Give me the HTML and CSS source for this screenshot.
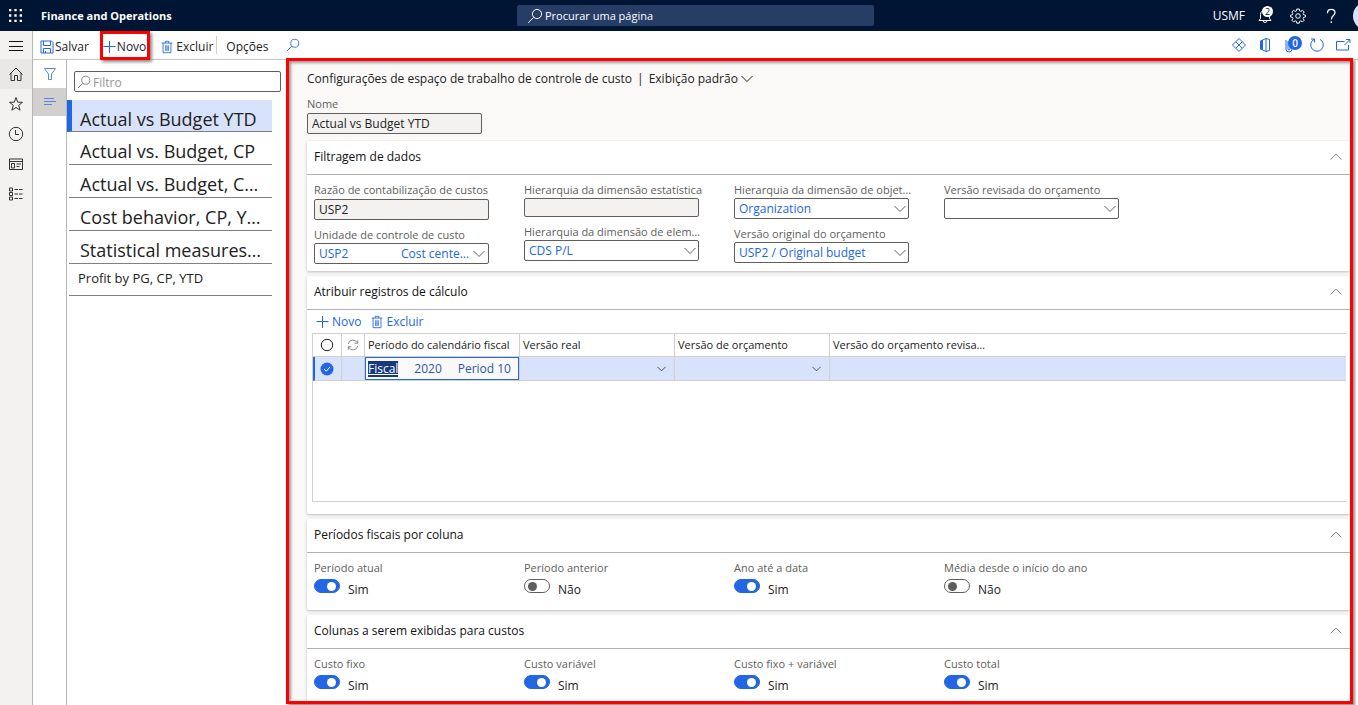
FILE: index.html
```html
<!DOCTYPE html>
<html lang="pt">
<head>
<meta charset="utf-8">
<title>Finance and Operations</title>
<link rel="stylesheet" href="styles.css">
</head>
<body>
<svg class="defs" aria-hidden="true">
  <symbol id="search" viewBox="0 0 16 16"><circle cx="10" cy="6" r="4.6"/><path d="M6.6 9.4 1.2 14.8"/></symbol>
  <symbol id="plus" viewBox="0 0 14 14"><path d="M6.500 1v12M.5 6.500h12"/></symbol>
  <symbol id="trash" viewBox="0 0 14 16"><path d="M1 3.500h12M5 3.500v-2h4v2M2.500 3.500v11h9v-11M5.500 6v6.500M7 6v6.500M8.500 6v6.500"/></symbol>
  <symbol id="down" viewBox="0 0 12 8"><path d="M.5 1 6 6.500 11.500 1"/></symbol>
  <symbol id="up" viewBox="0 0 12 8"><path d="M.5 6.500 6 1l5.500 5.500"/></symbol>
</svg>

<header class="topbar">
  <div class="brand">
    <button class="icon-btn" aria-label="Aplicativos">
      <svg class="waffle" viewBox="0 0 14 14"><path d="M0 0h2.500v2.500H0zM5.750 0h2.500v2.500h-2.500zM11.500 0H14v2.500h-2.500zM0 5.750h2.500v2.500H0zM5.750 5.750h2.500v2.500h-2.500zM11.500 5.750H14v2.500h-2.500zM0 11.500h2.500V14H0zM5.750 11.500h2.500V14h-2.500zM11.500 11.500H14V14h-2.500z"/></svg>
    </button>
    <span class="product">Finance and Operations</span>
  </div>
  <label class="page-search">
    <svg class="i16"><use href="#search"/></svg>
    <input type="text" placeholder="Procurar uma página" aria-label="Procurar uma página">
  </label>
  <div class="account">
    <span class="company">USMF</span>
    <button class="icon-btn bell" aria-label="Notificações">
      <svg class="i16" viewBox="0 0 16 16"><path d="M2 12.500h12l-1.500-2V6.500a4.500 4.500 0 0 0-9 0v4zM6 12.500a2 2 0 0 0 4 0"/></svg>
      <span class="bell-count">2</span>
    </button>
    <button class="icon-btn" aria-label="Configurações">
      <svg class="i16" viewBox="0 0 16 16"><circle cx="8" cy="8" r="2.300"/><path d="M6.800 1h2.400l.4 1.900 1.200.5 1.700-1.100 1.700 1.700-1.100 1.700.5 1.100 1.900.4v1.700l-1.900.4-.5 1.200 1.100 1.700-1.700 1.700-1.700-1.100-1.200.5-.4 1.900H6.800l-.4-1.900-1.200-.5-1.700 1.100-1.700-1.700 1.100-1.700-.5-1.200-1.900-.4V7.200l1.900-.4.500-1.100-1.100-1.700 1.700-1.700 1.700 1.100 1.200-.5z"/></svg>
    </button>
    <button class="icon-btn" aria-label="Ajuda">
      <svg class="i16 help" viewBox="0 0 16 16"><path d="M4.500 5.200C4.500 0 12 .4 12 4.800 12 7.500 8.300 7.800 8.300 11.500M8.300 13.200v1.800"/></svg>
    </button>
    <span class="avatar"></span>
  </div>
</header>

<div class="shell">
  <nav class="rail" aria-label="Navegação">
    <button aria-label="Menu"><svg class="i16" viewBox="0 0 16 16"><path d="M1 3.500h14M1 8.500h14M1 12.500h14"/></svg></button>
    <button class="active" aria-label="Início"><svg class="i16" viewBox="0 0 16 16"><path d="M1.500 8.500 8 2l6.500 6.500M3 7v7.500h3.500V9.500h3v5H13V7"/></svg></button>
    <button aria-label="Favoritos"><svg class="i16" viewBox="0 0 16 16"><path d="m8 1.500 1.700 4.700 4.800.1-3.800 3 1.400 4.900L8 11.400l-4.100 2.800 1.400-4.900-3.800-3 4.800-.1z"/></svg></button>
    <button aria-label="Recentes"><svg class="i16" viewBox="0 0 16 16"><circle cx="8" cy="8" r="6.700"/><path d="M7.500 4v4.500H11"/></svg></button>
    <button aria-label="Espaços de trabalho"><svg class="i16" viewBox="0 0 16 16"><path d="M1.500 3h13v10.500h-13zM1.500 5.500h13M3.500 7.500h3V12h-3zM8.500 8h4.500M8.500 10.500h3"/></svg></button>
    <button aria-label="Módulos"><svg class="i16" viewBox="0 0 16 16"><path d="M1.500 2h3v3h-3zM1.500 6.500h3v3h-3zM1.500 11h3v3h-3zM6.500 3.500H10M11 3.500h3.500M6.500 8H10M11 8h3.500M6.500 12.500H10M11 12.500h3.500"/></svg></button>
  </nav>

  <div class="workspace">
    <div class="actionbar">
      <button class="cmd"><svg class="i14" viewBox="0 0 14 14"><path d="M1 1h10.500L13 2.500V13H1zM3.500 1v4.500h7V1M3.500 13V8.500h7V13M5.500 13v-2"/></svg>Salvar</button>
      <button class="cmd marked"><svg class="i14"><use href="#plus"/></svg>Novo</button>
      <button class="cmd"><svg class="i14"><use href="#trash"/></svg>Excluir</button>
      <button class="cmd options">Opções</button>
      <button class="cmd find" aria-label="Pesquisar"><svg class="i14"><use href="#search"/></svg></button>
      <div class="tools">
        <button aria-label="Power Apps"><svg class="i16" viewBox="0 0 16 16"><path d="m1.500 8 6.500-6.500L14.500 8 8 14.500zM4.700 4.800l6.500 6.500M11.300 4.700l-6.500 6.500"/></svg></button>
        <button aria-label="Office"><svg class="i16" viewBox="0 0 16 16"><path d="M9 1.500 3.500 4v8L9 14.500zM9 1.500l3.500 1v11l-3.500 1"/><path class="fill" d="M3 4 6 2.700v10.600L3 12z"/></svg></button>
        <button class="clip" aria-label="Anexos"><svg class="i16" viewBox="0 0 16 16"><path d="M3 3v9a3 3 0 0 0 6 0V5M5 4v8a1 1 0 0 0 2 0V4"/></svg><span class="clip-count">0</span></button>
        <button aria-label="Atualizar"><svg class="i16" viewBox="0 0 16 16"><path d="M11 2.400A6.300 6.300 0 1 1 5 2.400M5.500 5.500V2H2"/></svg></button>
        <button aria-label="Abrir em nova janela"><svg class="i16" viewBox="0 0 16 16"><path d="M9.500 4.500h-8v8.500h12V8M9.500 8l5-5M11 2.500h4V6"/></svg></button>
      </div>
    </div>

    <div class="body">
      <div class="strip">
        <button aria-label="Filtros"><svg class="i14" viewBox="0 0 14 14"><path d="M1.500 1.500h11L8.500 7v5.500h-3V7z"/></svg></button>
        <button class="active" aria-label="Lista"><svg class="i14" viewBox="0 0 14 14"><path d="M1 3.500h10M1 6.500h12M1 9.500h8"/></svg></button>
      </div>
      <aside class="records">
        <label class="filter">
          <svg class="i14"><use href="#search"/></svg>
          <input type="text" placeholder="Filtro" aria-label="Filtro">
        </label>
        <ul>
          <li class="selected">Actual vs Budget YTD</li>
          <li>Actual vs. Budget, CP</li>
          <li>Actual vs. Budget, C…</li>
          <li>Cost behavior, CP, Y…</li>
          <li>Statistical measures…</li>
          <li class="small">Profit by PG, CP, YTD</li>
        </ul>
      </aside>

      <main class="form">
        <h1>Configurações de espaço de trabalho de controle de custo<span class="bar">|</span><button class="view">Exibição padrão<svg class="chev"><use href="#down"/></svg></button></h1>
        <div class="field name">
          <label for="nome">Nome</label>
          <input id="nome" type="text" value="Actual vs Budget YTD" readonly>
        </div>

        <section class="card">
          <h2>Filtragem de dados<svg class="chev"><use href="#up"/></svg></h2>
          <div class="columns filters">
            <div class="col">
              <div class="field"><label for="razao">Razão de contabilização de custos</label><input id="razao" type="text" value="USP2" readonly></div>
              <div class="field"><label for="unidade">Unidade de controle de custo</label>
                <button id="unidade" class="combo" aria-haspopup="listbox"><span>USP2</span><span class="second">Cost cente…</span><svg class="chev"><use href="#down"/></svg></button></div>
            </div>
            <div class="col">
              <div class="field"><label for="estat">Hierarquia da dimensão estatística</label><input id="estat" class="short" type="text" readonly></div>
              <div class="field"><label for="elem">Hierarquia da dimensão de elem…</label>
                <div class="pick"><select id="elem"><option>CDS P/L</option></select><svg class="chev"><use href="#down"/></svg></div></div>
            </div>
            <div class="col">
              <div class="field"><label for="objeto">Hierarquia da dimensão de objet…</label>
                <div class="pick"><select id="objeto"><option>Organization</option></select><svg class="chev"><use href="#down"/></svg></div></div>
              <div class="field"><label for="original">Versão original do orçamento</label>
                <div class="pick"><select id="original"><option>USP2 / Original budget</option></select><svg class="chev"><use href="#down"/></svg></div></div>
            </div>
            <div class="col">
              <div class="field"><label for="revisada">Versão revisada do orçamento</label>
                <div class="pick"><select id="revisada"><option></option></select><svg class="chev"><use href="#down"/></svg></div></div>
            </div>
          </div>
        </section>

        <section class="card">
          <h2>Atribuir registros de cálculo<svg class="chev"><use href="#up"/></svg></h2>
          <div class="gridbar">
            <button><svg class="i14"><use href="#plus"/></svg>Novo</button>
            <button><svg class="i14"><use href="#trash"/></svg>Excluir</button>
          </div>
          <div class="grid">
            <table>
              <colgroup><col class="c-check"><col class="c-sync"><col class="c-data"><col class="c-data"><col class="c-data"><col></colgroup>
              <thead>
                <tr>
                  <th><svg class="i14" viewBox="0 0 14 14"><circle cx="7" cy="7" r="5.700"/></svg></th>
                  <th><svg class="i12" viewBox="0 0 14 14"><path d="M1.500 6a5.500 5.500 0 0 1 10.500-1.500M12.500 1.500v3.500H9M12.500 8A5.500 5.500 0 0 1 2 9.500M1.500 12.500V9H5"/></svg></th>
                  <th>Período do calendário fiscal</th>
                  <th>Versão real</th>
                  <th>Versão de orçamento</th>
                  <th>Versão do orçamento revisa…</th>
                </tr>
              </thead>
              <tbody>
                <tr>
                  <td class="mark"><svg class="i14" viewBox="0 0 14 14"><circle class="fill" cx="7" cy="7" r="6.500"/><path class="tick" d="m4 7 2.200 2.200L10 5"/></svg></td>
                  <td></td>
                  <td class="editing"><div class="period"><span class="hl">Fiscal</span><span>2020</span><span>Period 10</span></div></td>
                  <td class="drop"><svg class="chev-s"><use href="#down"/></svg></td>
                  <td class="drop"><svg class="chev-s"><use href="#down"/></svg></td>
                  <td></td>
                </tr>
              </tbody>
            </table>
          </div>
        </section>

        <section class="card">
          <h2>Períodos fiscais por coluna<svg class="chev"><use href="#up"/></svg></h2>
          <div class="columns toggles">
            <div class="toggle"><label for="t1">Período atual</label><div><input id="t1" type="checkbox" role="switch" checked><span>Sim</span></div></div>
            <div class="toggle"><label for="t2">Período anterior</label><div><input id="t2" type="checkbox" role="switch"><span>Não</span></div></div>
            <div class="toggle"><label for="t3">Ano até a data</label><div><input id="t3" type="checkbox" role="switch" checked><span>Sim</span></div></div>
            <div class="toggle"><label for="t4">Média desde o início do ano</label><div><input id="t4" type="checkbox" role="switch"><span>Não</span></div></div>
          </div>
        </section>

        <section class="card">
          <h2>Colunas a serem exibidas para custos<svg class="chev"><use href="#up"/></svg></h2>
          <div class="columns toggles">
            <div class="toggle"><label for="t5">Custo fixo</label><div><input id="t5" type="checkbox" role="switch" checked><span>Sim</span></div></div>
            <div class="toggle"><label for="t6">Custo variável</label><div><input id="t6" type="checkbox" role="switch" checked><span>Sim</span></div></div>
            <div class="toggle"><label for="t7">Custo fixo + variável</label><div><input id="t7" type="checkbox" role="switch" checked><span>Sim</span></div></div>
            <div class="toggle"><label for="t8">Custo total</label><div><input id="t8" type="checkbox" role="switch" checked><span>Sim</span></div></div>
          </div>
        </section>
      </main>
    </div>
  </div>
</div>
</body>
</html>
```

FILE: styles.css
```css
* { box-sizing: border-box; }

body {
  margin: 0;
  height: 100vh;
  display: flex;
  flex-direction: column;
  overflow: hidden;
  background: #fff;
  color: #222;
  font: 12px/16px "Open Sans", "Noto Sans", sans-serif;
}

button, input, select { font: inherit; color: inherit; margin: 0; }
button { border: 0; background: none; padding: 0; display: flex; align-items: center; }
h1, h2, ul { margin: 0; padding: 0; font-weight: 400; }

svg { fill: none; stroke: currentColor; stroke-width: 1; flex: none; display: block; }
.fill { fill: currentColor; stroke: none; }
.defs { position: absolute; width: 0; height: 0; }
.i16 { width: 16px; height: 16px; }
.i14 { width: 14px; height: 14px; }
.i12 { width: 12px; height: 12px; }
.chev { width: 12px; height: 8px; }
.chev-s { width: 9px; height: 6px; }

/* Top bar */
.topbar {
  flex: none;
  height: 31px;
  display: grid;
  grid-template-columns: 517px minmax(0, 357px) 1fr;
  align-items: center;
  overflow: hidden;
  background: #001433;
  color: #fff;
}
.brand { display: flex; align-items: center; }
.brand .icon-btn { width: 41px; padding-left: 9px; }
.waffle { width: 13px; height: 13px; fill: #fff; stroke: none; }
.product { font-size: 11px; font-weight: 700; }
.page-search {
  height: 21px;
  display: flex;
  align-items: center;
  padding-left: 10px;
  background: #263e66;
  border-radius: 2px;
}
.page-search input { flex: 1; min-width: 0; border: 0; padding: 0 2px; background: none; outline: 0; font-size: 11px; }
.page-search input::placeholder { color: #fff; opacity: 1; }
.account { display: flex; justify-content: flex-end; align-items: center; overflow: hidden; }
.account .icon-btn { width: 33px; justify-content: center; }
.company { margin-right: 3px; }
.help { stroke-width: 1.3; }
.bell { position: relative; }
.bell-count {
  position: absolute;
  top: -2px;
  right: 8px;
  width: 11px;
  height: 11px;
  border-radius: 50%;
  background: #fff;
  color: #001433;
  font-size: 9px;
  line-height: 11px;
}
.avatar { flex: none; width: 28px; height: 28px; margin: 0 -23px 0 6px; border-radius: 50%; background: #d9e2fb; }

/* Left rail */
.shell { flex: 1; min-height: 0; display: flex; }
.rail { flex: none; width: 33px; background: #f3f2f1; border-right: 1px solid #b8b6b4; }
.rail button { width: 32px; height: 30px; justify-content: center; color: #333; }
.rail button:first-child { height: 28px; padding-top: 2px; color: #111; }
.rail .active { background: #eae8e7; }

/* Action bar */
.workspace { flex: 1; min-width: 0; display: flex; flex-direction: column; }
.actionbar { flex: none; height: 29px; display: flex; align-items: center; padding-left: 7px; border-bottom: 1px solid #c8c6c4; }
.cmd { height: 28px; gap: 1px; padding-top: 3px; }
.cmd svg, .tools svg { color: #2266e3; }
.marked { position: relative; margin-left: 14px; gap: 0; }
.marked::after {
  content: "";
  position: absolute;
  inset: 0 -4px -1px -3px;
  border: 3px solid #f00;
  box-shadow: 2px 2px 3px #888;
}
.cmd.marked + .cmd { margin-left: 14px; gap: 2px; }
.options { height: 18px; margin-left: 3px; padding-left: 9px; border-left: 1px solid #d2d0ce; }
.find { margin-left: 18px; padding-top: 0; }
.tools { margin-left: auto; margin-right: 7px; display: flex; gap: 10px; }
.clip { position: relative; }
.clip-count {
  position: absolute;
  top: -1px;
  right: -3px;
  width: 14px;
  height: 14px;
  border-radius: 50%;
  background: #2266e3;
  color: #fff;
  font-size: 10px;
  font-weight: 600;
  line-height: 14px;
}

/* Record list */
.body { flex: 1; min-height: 0; display: flex; }
.strip { flex: none; width: 34px; border-right: 1px solid #b8b6b4; }
.strip button { width: 33px; height: 28px; justify-content: center; color: #5b82e8; }
.strip .active { background: #d2d0ce; }
.records { flex: none; width: 219px; padding-top: 11px; }
.filter {
  height: 21px;
  margin: 0 5px 8px 7px;
  padding-left: 2px;
  display: flex;
  align-items: center;
  border: 1px solid #605e5c;
  border-radius: 2px;
  color: #777;
}
.filter input { flex: 1; min-width: 0; border: 0; padding: 2px 2px 0; background: none; outline: 0; }
.filter input::placeholder { color: #979593; opacity: 1; }
.records ul { list-style: none; margin-right: 14px; }
.records li {
  height: 33px;
  margin-left: 2px;
  padding: 7px 0 0 11px;
  border-bottom: 1px solid #808080;
  font-size: 18px;
  line-height: 24px;
  white-space: nowrap;
}
.records .selected { height: 32px; margin-left: 0; padding-left: 8px; border-left: 5px solid #2266e3; background: #d8e3fb; }
.records .small { height: 32px; padding: 4px 0 0 9px; font-size: 13px; line-height: 20px; }

/* Form */
.form {
  position: relative;
  flex: 1;
  min-width: 0;
  margin: 0 8px 1px 0;
  padding: 11px 0 0 21px;
  overflow: clip;
  overflow-clip-margin: 6px;
  background: #faf9f8;
}
.form::after {
  content: "";
  position: absolute;
  inset: -2px -3px 0 0;
  border: 3px solid #f00;
  box-shadow: 2px 2px 3px #888, inset 2px 2px 3px #999;
  pointer-events: none;
}
h1 { display: flex; align-items: center; font-size: 12px; line-height: 16px; }
.bar { margin: 0 5px; }
.view .chev { margin-left: 3px; }
.field { width: 175px; display: flex; flex-direction: column; }
.field label, .toggle label { font-size: 11px; line-height: 16px; color: #605e5c; white-space: nowrap; }
.field input, .field select, .combo {
  width: 100%;
  height: 21px;
  padding: 0 4px;
  border: 1px solid #605e5c;
  border-radius: 2px;
  background: #fff;
}
.field input { background: #f3f2f1; }
.field input.short { height: 19px; }
.field select { display: block; appearance: none; color: #2266e3; }
.pick { position: relative; }
.pick .chev { position: absolute; right: 3px; top: 7px; color: #605e5c; pointer-events: none; }
.combo { color: #2266e3; justify-content: space-between; }
.combo .second { margin-left: auto; margin-right: 4px; }
.combo .chev { color: #605e5c; margin-right: -1px; }
.name { margin: 9px 0 7px; gap: 1px; }

.card { background: #fff; margin-bottom: 5px; box-shadow: 0 1px 3px #bbb; border-radius: 2px; }
h2 {
  height: 34px;
  display: flex;
  align-items: center;
  justify-content: space-between;
  padding: 0 8px 1px 7px;
  border-bottom: 1px solid #b3b0ad;
  font-size: 12px;
  font-weight: 500;
  color: #111;
}
h2 .chev { color: #888; }
.columns { display: grid; grid-template-columns: repeat(4, 210px); padding: 0 7px; }
.filters { padding-top: 7px; padding-bottom: 7px; }
.col { display: flex; flex-direction: column; gap: 7px; }
.col:first-child .field:first-child { gap: 1px; }

.gridbar { display: flex; gap: 9px; height: 23px; padding-left: 9px; color: #2266e3; }
.gridbar button { gap: 2px; }
.grid { height: 169px; margin: 0 4px 0 5px; border: 1px solid #d2d0ce; border-right: 0; }
.card:has(.grid) { padding-bottom: 12px; }
table { width: 100%; table-layout: fixed; border-collapse: separate; border-spacing: 0; }
.c-check { width: 29px; }
.c-sync { width: 23px; }
.c-data { width: 155px; }
th, td { padding: 0 3px; border-right: 1px solid #d2d0ce; border-bottom: 1px solid #d2d0ce; text-align: left; font-weight: 400; white-space: nowrap; }
th { height: 23px; font-size: 11px; }
th:last-child, td:last-child { border-right: 0; }
th svg, .mark svg { margin: 0 auto; }
th .i12 { color: #777; }
td { height: 24px; background: #d8e3fb; }
.mark { padding: 0 4px 0 1px; border-left: 2px solid #2266e3; color: #2266e3; }
.tick { stroke: #fff; }
.editing { padding: 0; }
.period {
  height: 23px;
  display: flex;
  align-items: center;
  justify-content: space-between;
  padding: 0 7px 0 2px;
  border: 1px solid #2266e3;
  background: #faf9f8;
  color: #2b56ad;
}
.hl { background: #14397f; color: #fff; text-decoration: underline; }
.drop svg { margin-left: auto; margin-right: 5px; }

.toggles { padding-top: 7px; padding-bottom: 11px; }
.toggle > div { display: flex; align-items: flex-start; gap: 8px; margin-top: 3px; }
.toggle label { display: block; }
.toggle span { padding-top: 3px; }
.toggle div { min-height: 20px; }
.toggle input {
  appearance: none;
  width: 26px;
  height: 14px;
  padding: 2px 3px;
  display: flex;
  align-items: center;
  border: 1px solid #605e5c;
  border-radius: 7px;
  background: #fff;
}
.toggle input::before { content: ""; width: 9px; height: 9px; border-radius: 50%; background: #605e5c; }
.toggle input:checked { justify-content: flex-end; background: #2266e3; border-color: #2266e3; }
.toggle input:checked::before { background: #fff; }
```
